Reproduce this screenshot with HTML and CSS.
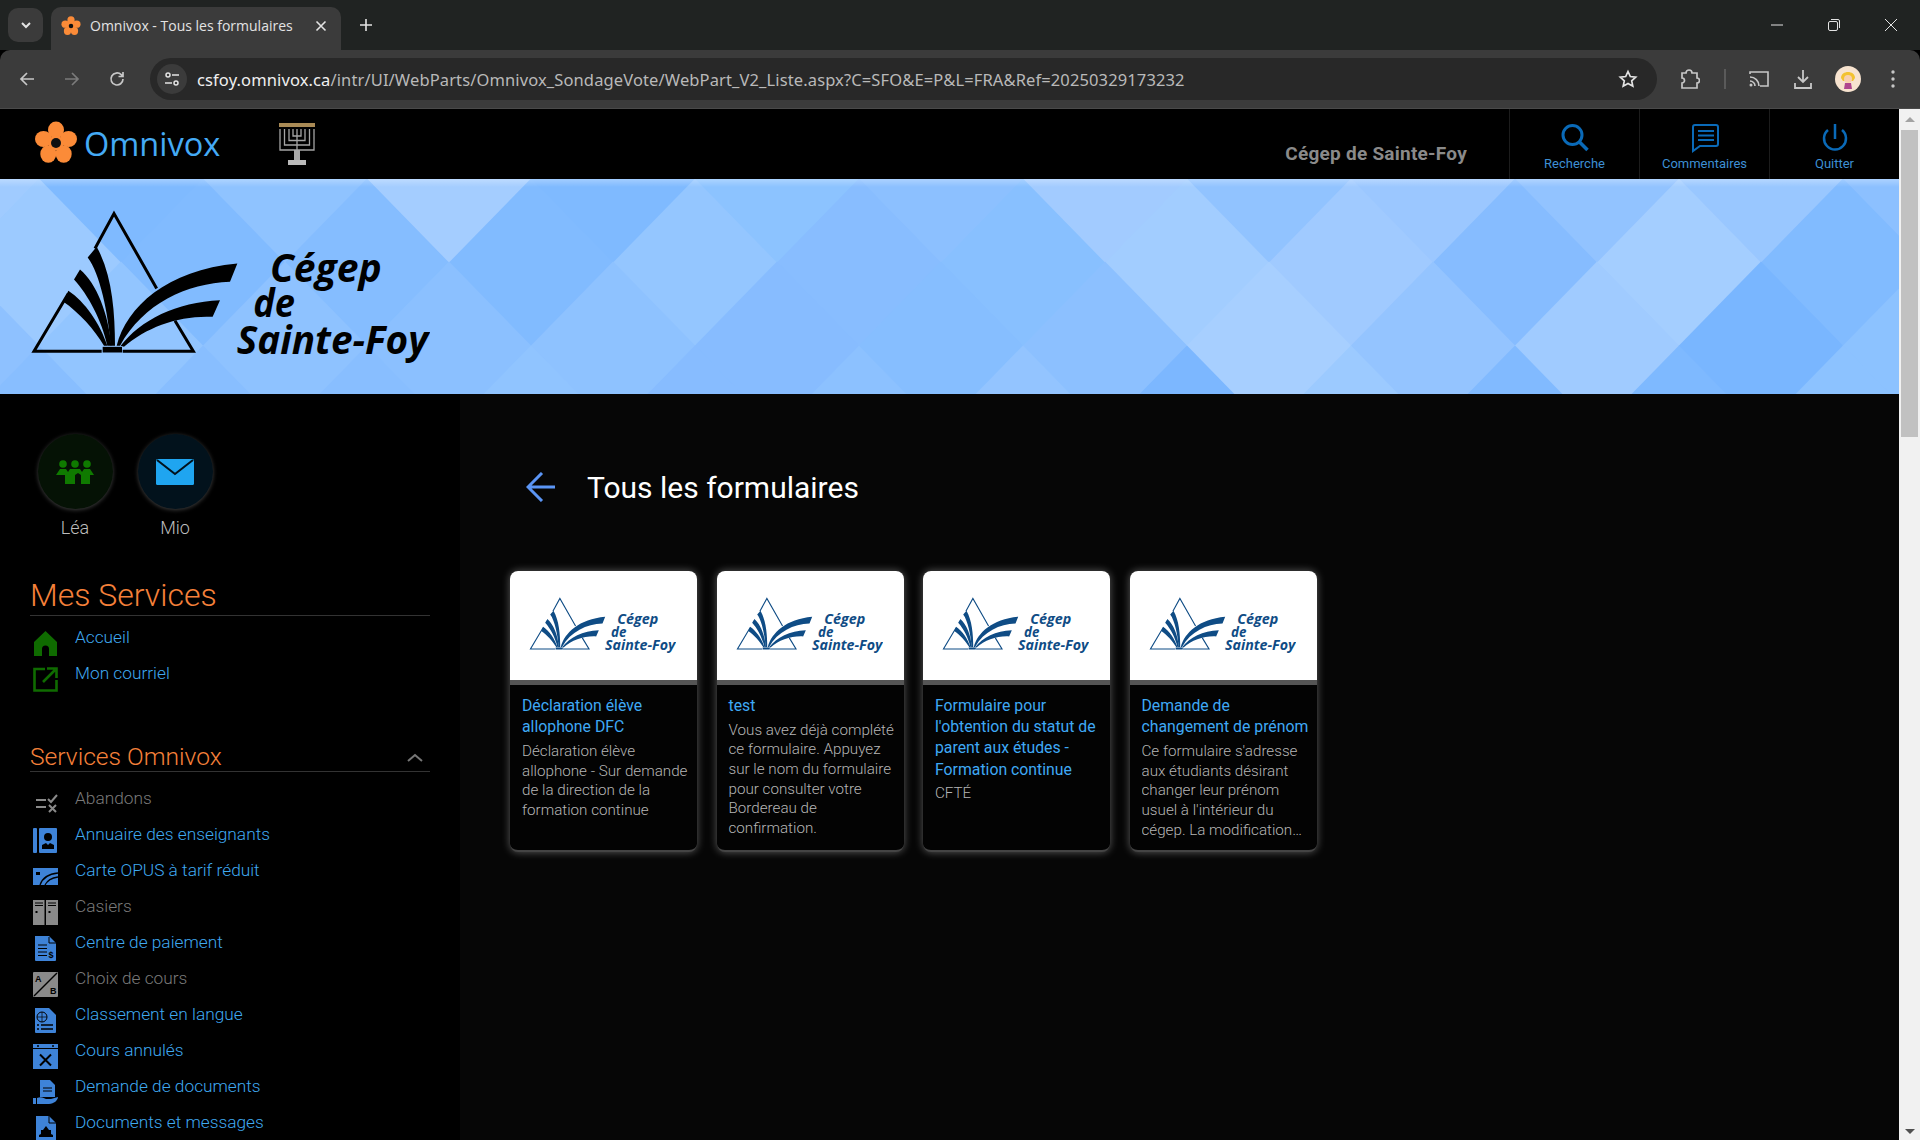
FILE: index.html
```html
<!DOCTYPE html>
<html lang="fr">
  <head>
    <meta charset="UTF-8" />
    <title>Omnivox - Tous les formulaires</title>
    <link rel="stylesheet" href="styles.css">
  </head>
  <body>
    <svg class="defs" width="0" height="0">
      <symbol id="flower" viewBox="-22 -22 44 44">
        <g fill="#fb8b38">
          <ellipse cx="0" cy="-13" rx="8" ry="8.500"/>
          <ellipse cx="12.500" cy="-4" rx="8.500" ry="8"/>
          <ellipse cx="7.700" cy="11" rx="8" ry="8.800"/>
          <ellipse cx="-7.700" cy="11" rx="8" ry="8.800"/>
          <ellipse cx="-12.500" cy="-4" rx="8.500" ry="8"/>
          <circle r="7.500"/>
        </g>
        <circle r="5" fill="#111"/>
      </symbol>
      <g id="cegep-mark">
        <path fill="none" stroke="currentColor" stroke-width="9" d="M285 205L342 100L470 325M525 422L580 513H368M305 513H102L205 340"/>
        <path fill="currentColor" d="M290 200L263 232C300 280 325 400 332 497H345C345 390 335 280 290 200Z"/>
        <path fill="currentColor" d="M240 268L222 298C265 345 305 420 322 497H334C325 400 290 310 240 268Z"/>
        <path fill="currentColor" d="M205 332L190 365C235 395 285 450 312 497H322C300 430 255 365 205 332Z"/>
        <path fill="currentColor" d="M350 497C380 380 500 270 712 250L690 305C560 310 430 370 360 497Z"/>
        <path fill="currentColor" d="M362 497C420 420 530 365 660 360L638 410C540 405 440 440 372 500Z"/>
        <rect x="308" y="500" width="58" height="17" fill="currentColor"/>
      </g>
      <path id="dm" d="M0-84.500L82.500 0 0 84.500-82.500 0z"/>
    </svg>

    <div class="tabstrip">
      <div class="tab-list">
        <svg width="14" height="14" viewBox="0 0 14 14"><path d="M3 5l4 4 4-4" fill="none" stroke="#e3e3e3" stroke-width="2"/></svg>
      </div>
      <div class="tab">
        <svg class="tab-icon" width="20" height="20"><use href="#flower"/></svg>
        <span class="tab-title">Omnivox - Tous les formulaires</span>
        <svg width="12" height="12" viewBox="0 0 12 12"><path d="M1.500 1.500l9 9M10.500 1.500l-9 9" stroke="#e3e3e3" stroke-width="1.600"/></svg>
      </div>
      <svg class="new-tab" width="14" height="14" viewBox="0 0 14 14"><path d="M7 1v12M1 7h12" stroke="#e3e3e3" stroke-width="1.600"/></svg>
      <div class="window-btns">
        <svg width="14" height="14" viewBox="0 0 14 14"><path d="M1 7h12" stroke="#e3e3e3" stroke-width="1"/></svg>
        <svg width="14" height="14" viewBox="0 0 14 14"><rect x="1.500" y="3.500" width="9" height="9" rx="1.500" fill="none" stroke="#e3e3e3"/><path d="M4 1.500h7a1.500 1.500 0 0 1 1.500 1.500v7" fill="none" stroke="#e3e3e3"/></svg>
        <svg width="14" height="14" viewBox="0 0 14 14"><path d="M1 1l12 12M13 1L1 13" stroke="#e3e3e3" stroke-width="1"/></svg>
      </div>
    </div>

    <div class="toolbar">
      <div class="nav-btns">
        <svg width="18" height="18" viewBox="0 0 18 18"><path d="M16 9H3M9 3L3 9l6 6" fill="none" stroke="#c7c7c7" stroke-width="1.700"/></svg>
        <svg width="18" height="18" viewBox="0 0 18 18"><path d="M2 9h13M9 3l6 6-6 6" fill="none" stroke="#7b7b7b" stroke-width="1.700"/></svg>
        <svg width="18" height="18" viewBox="0 0 18 18"><path d="M15 9a6 6 0 1 1-1.800-4.300L15 6.500M15 2v4.500h-4.500" fill="none" stroke="#c7c7c7" stroke-width="1.700"/></svg>
      </div>
      <div class="omnibox">
        <div class="tune">
          <svg width="16" height="16" viewBox="0 0 16 16"><g fill="none" stroke="#e3e3e3" stroke-width="1.500"><circle cx="4" cy="4" r="2"/><path d="M8 4h7M1 12h7"/><circle cx="12" cy="12" r="2"/></g></svg>
        </div>
        <span class="url"><b>csfoy.omnivox.ca</b>/intr/UI/WebParts/Omnivox_SondageVote/WebPart_V2_Liste.aspx?C=SFO&amp;E=P&amp;L=FRA&amp;Ref=20250329173232</span>
        <svg class="star" width="20" height="20" viewBox="0 0 20 20"><path d="M10 2.500l2.300 5 5.400.6-4 3.700 1.100 5.400L10 14.500l-4.800 2.700 1.100-5.400-4-3.700 5.400-.6z" fill="none" stroke="#e3e3e3" stroke-width="1.700"/></svg>
      </div>
      <div class="tool-btns">
        <svg class="tool-ext" width="20" height="22" viewBox="0 0 20 22"><path d="M2 5h4a3 3 0 0 1 6 0h5v5a2.500 2.500 0 0 1 0 5v5H2v-5a2.500 2.500 0 0 0 0-5z" fill="none" stroke="#c7c7c7" stroke-width="1.700"/></svg>
        <span class="tool-sep"></span>
        <svg class="tool-cast" width="22" height="20" viewBox="0 0 22 20"><path d="M2 5V3h18v14h-8M2 8a9 9 0 0 1 9 9M2 12a5 5 0 0 1 5 5" fill="none" stroke="#c7c7c7" stroke-width="1.600"/><circle cx="3" cy="16" r="1.500" fill="#c7c7c7"/></svg>
        <svg class="tool-dl" width="20" height="22" viewBox="0 0 20 22"><path d="M10 2v12M5 9l5 5 5-5M2 15v5h16v-5" fill="none" stroke="#c7c7c7" stroke-width="1.800"/></svg>
        <svg class="tool-avatar" width="26" height="26" viewBox="0 0 26 26"><circle cx="13" cy="13" r="13" fill="#f7e3cf"/><path d="M6 12c0-8 14-8 14 0l-2 3H8z" fill="#f2c230"/><circle cx="13" cy="13" r="4" fill="#f8cfae"/><path d="M9 23l1-6h6l1 6z" fill="#b0458e"/></svg>
        <svg class="tool-dots" width="6" height="20" viewBox="0 0 6 20"><g fill="#c7c7c7"><circle cx="3" cy="3" r="1.700"/><circle cx="3" cy="10" r="1.700"/><circle cx="3" cy="17" r="1.700"/></g></svg>
      </div>
    </div>

    <div class="viewport">
      <div class="page">
        <header class="topbar">
          <div class="brand">
            <svg width="44" height="44"><use href="#flower"/></svg>
            <span class="brand-name">Omnivox</span>
          </div>
          <svg class="menorah" width="38" height="43" viewBox="0 0 38 43">
            <rect x="1" y="0" width="36" height="4" fill="#a98a55"/>
            <path d="M2 6v21h34V6M6.500 6v16h25V6M11 6v11.500h16V6M15 6v7h8V6M19 6v21" fill="none" stroke="#a5a5a5" stroke-width="1.300"/>
            <rect x="16" y="27" width="6" height="10" fill="#aaa"/>
            <rect x="10" y="37" width="18" height="5" fill="#bbb"/>
          </svg>
          <span class="school">Cégep de Sainte-Foy</span>
          <nav class="top-actions">
            <a class="action">
              <svg width="30" height="30" viewBox="0 0 30 30"><circle cx="12.500" cy="12" r="9.500" fill="none" stroke="#0a6ab8" stroke-width="3"/><path d="M19.500 19l8 8" stroke="#0a6ab8" stroke-width="3.500"/></svg>
              <span>Recherche</span>
            </a>
            <a class="action">
              <svg width="30" height="30" viewBox="0 0 30 30"><path d="M5 2h21a2 2 0 0 1 2 2v17a2 2 0 0 1-2 2H10l-7 5V4a2 2 0 0 1 2-2z" fill="none" stroke="#0a6ab8" stroke-width="2"/><path d="M8 8h16M8 12.500h16M8 17h16" stroke="#0a6ab8" stroke-width="2"/></svg>
              <span>Commentaires</span>
            </a>
            <a class="action">
              <svg width="30" height="30" viewBox="0 0 30 30"><path d="M15 1v15" stroke="#0a6ab8" stroke-width="2.500"/><path d="M8 7a11 11 0 1 0 14 0" fill="none" stroke="#0a6ab8" stroke-width="2.500"/></svg>
              <span>Quitter</span>
            </a>
          </nav>
        </header>

        <div class="banner">
          <svg class="banner-bg" viewBox="0 0 1899 215" preserveAspectRatio="none">
            <defs>
              <linearGradient id="top-fade" x1="0" y1="0" x2="0" y2="1">
                <stop offset="0" stop-color="#fff" stop-opacity=".28"/>
                <stop offset="1" stop-color="#fff" stop-opacity="0"/>
              </linearGradient>
            </defs>
            <rect width="1899" height="215" fill="#84bcff"/>
            <g>
              <use href="#dm" x="-43" y="0" fill="#a6ceff"/>
              <use href="#dm" x="121" y="0" fill="#7cb8ff"/>
              <use href="#dm" x="285" y="0" fill="#90c3ff"/>
              <use href="#dm" x="449" y="0" fill="#abd0ff"/>
              <use href="#dm" x="613" y="0" fill="#7cb8ff"/>
              <use href="#dm" x="777" y="0" fill="#8cc4ff"/>
              <use href="#dm" x="941" y="0" fill="#8dc0ff"/>
              <use href="#dm" x="1105" y="0" fill="#a8ceff"/>
              <use href="#dm" x="1269" y="0" fill="#93c3ff"/>
              <use href="#dm" x="1433" y="0" fill="#9fc9ff"/>
              <use href="#dm" x="1597" y="0" fill="#94c3ff"/>
              <use href="#dm" x="1761" y="0" fill="#9dc8ff"/>
              <use href="#dm" x="1925" y="0" fill="#8dc0ff"/>

              <use href="#dm" x="39" y="84" fill="#a0ccff"/>
              <use href="#dm" x="203" y="84" fill="#7fb9ff"/>
              <use href="#dm" x="367" y="84" fill="#84bcff"/>
              <use href="#dm" x="531" y="84" fill="#7fb9ff"/>
              <use href="#dm" x="695" y="84" fill="#96c7ff"/>
              <use href="#dm" x="859" y="84" fill="#87bcff"/>
              <use href="#dm" x="1023" y="84" fill="#88c0ff"/>
              <use href="#dm" x="1187" y="84" fill="#a8d0ff"/>
              <use href="#dm" x="1351" y="84" fill="#a6ccff"/>
              <use href="#dm" x="1515" y="84" fill="#85bbff"/>
              <use href="#dm" x="1679" y="84" fill="#abd1ff"/>
              <use href="#dm" x="1843" y="84" fill="#7fb9ff"/>

              <use href="#dm" x="-43" y="167" fill="#8fc1ff"/>
              <use href="#dm" x="121" y="167" fill="#94c6ff"/>
              <use href="#dm" x="285" y="167" fill="#8fc2ff"/>
              <use href="#dm" x="449" y="167" fill="#8bc0ff"/>
              <use href="#dm" x="613" y="167" fill="#8fc2ff"/>
              <use href="#dm" x="777" y="167" fill="#86bbff"/>
              <use href="#dm" x="941" y="167" fill="#85bdff"/>
              <use href="#dm" x="1105" y="167" fill="#8cc0ff"/>
              <use href="#dm" x="1269" y="167" fill="#aed2ff"/>
              <use href="#dm" x="1433" y="167" fill="#97c5ff"/>
              <use href="#dm" x="1597" y="167" fill="#a5cdff"/>
              <use href="#dm" x="1761" y="167" fill="#75b3ff"/>
              <use href="#dm" x="1925" y="167" fill="#8cc2ff"/>

              <use href="#dm" x="39" y="251" fill="#88bdff"/>
              <use href="#dm" x="203" y="251" fill="#88bdff"/>
              <use href="#dm" x="367" y="251" fill="#88bdff"/>
              <use href="#dm" x="531" y="251" fill="#92c5ff"/>
              <use href="#dm" x="695" y="251" fill="#86bbff"/>
              <use href="#dm" x="859" y="251" fill="#8cc1ff"/>
              <use href="#dm" x="1023" y="251" fill="#95c5ff"/>
              <use href="#dm" x="1187" y="251" fill="#78b5ff"/>
              <use href="#dm" x="1351" y="251" fill="#a0ccff"/>
              <use href="#dm" x="1515" y="251" fill="#7fb8ff"/>
              <use href="#dm" x="1679" y="251" fill="#7bb7ff"/>
              <use href="#dm" x="1843" y="251" fill="#8cc2ff"/>
            </g>
            <rect width="1899" height="215" fill="#8cc1ff" fill-opacity=".2"/>
            <rect width="1899" height="8" fill="url(#top-fade)"/>
          </svg>
          <svg class="banner-logo" width="400" height="157" viewBox="90 90 1200 470">
            <use href="#cegep-mark"/>
            <g class="logo-text">
              <text x="810" y="305" textLength="335" lengthAdjust="spacingAndGlyphs">Cégep</text>
              <text x="760" y="412" textLength="125" lengthAdjust="spacingAndGlyphs">de</text>
              <text x="710" y="522" textLength="575" lengthAdjust="spacingAndGlyphs">Sainte-Foy</text>
            </g>
          </svg>
        </div>

        <div class="content">
          <aside class="sidebar">
            <div class="shortcuts">
              <a class="shortcut">
                <span class="bubble bubble-lea">
                  <svg width="38" height="24" viewBox="0 0 38 24"><g fill="#0f7a00"><circle cx="7" cy="4" r="3.800"/><circle cx="19" cy="4" r="3.800"/><circle cx="31" cy="4" r="3.800"/><path d="M0 15l4-6h6l2 3 2-3h10l2 3 2-3h6l4 6h-4v9h-9v-9l-3-2-3 2v9H9v-9z"/></g></svg>
                </span>
                <span class="shortcut-name">Léa</span>
              </a>
              <a class="shortcut">
                <span class="bubble bubble-mio">
                  <svg width="38" height="26" viewBox="0 0 38 26"><rect width="38" height="26" rx="1.500" fill="#1fa5f0"/><path d="M1 1l18 14L37 1" fill="none" stroke="#02121c" stroke-width="2"/></svg>
                </span>
                <span class="shortcut-name">Mio</span>
              </a>
            </div>

            <h2 class="section-title">Mes Services</h2>
            <ul class="links">
              <li><svg width="25" height="25" viewBox="0 0 25 25"><path d="M12.500 0L24 11v14h-8v-7a3.500 3.500 0 0 0-7 0v7H1V11z" fill="#0f6b00"/></svg><a>Accueil</a></li>
              <li><svg width="25" height="25" viewBox="0 0 25 25"><path d="M12 2H1.500v21.500h22V13M10 15L22 3M14 1.500h9.500V11" fill="none" stroke="#0f6b00" stroke-width="2.600"/></svg><a>Mon courriel</a></li>
            </ul>

            <div class="section-head">
              <h3 class="section-sub">Services Omnivox</h3>
              <svg width="16" height="10" viewBox="0 0 16 10"><path d="M1 8l7-6 7 6" fill="none" stroke="#777" stroke-width="2"/></svg>
            </div>
            <ul class="links">
              <li class="off"><svg width="25" height="25" viewBox="0 0 25 25"><path d="M3 8h10M3 15h10M15 7l3 3 6-7M16 13l7 7M23 13l-7 7" fill="none" stroke="#8a8a8a" stroke-width="2"/></svg><a>Abandons</a></li>
              <li><svg width="25" height="25" viewBox="0 0 25 25"><rect x="0" width="4" height="25" rx="1" fill="#3e83d8"/><rect x="6" width="18" height="25" rx="1" fill="#3e83d8"/><circle cx="15" cy="9" r="4" fill="#000"/><path d="M9 21v-4l4-2 2 2 2-2 4 2v4z" fill="#000"/></svg><a>Annuaire des enseignants</a></li>
              <li><svg width="25" height="25" viewBox="0 0 25 25"><rect y="4" width="25" height="17" fill="#3e83d8"/><path d="M7 21c2-6 8-11 18-12M12 21c2-4 6-7 13-8" fill="none" stroke="#000" stroke-width="1.300"/><rect x="3" y="8" width="4" height="3" fill="#000"/></svg><a>Carte OPUS à tarif réduit</a></li>
              <li class="off"><svg width="25" height="25" viewBox="0 0 25 25"><rect width="11.500" height="25" fill="#8a8a8a"/><rect x="13" width="12" height="25" fill="#8a8a8a"/><path d="M2 3h8M2 5.500h8M15 3h8M15 5.500h8" stroke="#000"/><rect x="2.500" y="11" width="2" height="2" fill="#000"/><rect x="15.500" y="11" width="2" height="2" fill="#000"/></svg><a>Casiers</a></li>
              <li><svg width="25" height="25" viewBox="0 0 25 25"><path d="M2 0h14l7 7v17a1 1 0 0 1-1 1H3a1 1 0 0 1-1-1z" fill="#3e83d8"/><path d="M5 9h9M5 12.500h9M5 16h9M5 19.500h9M16 1v6h7" stroke="#000" fill="none"/><text x="15.500" y="21.500" class="icon-text">$</text></svg><a>Centre de paiement</a></li>
              <li class="off"><svg width="25" height="25" viewBox="0 0 25 25"><rect width="25" height="25" rx="1" fill="#8a8a8a"/><path d="M1 24L24 1" stroke="#000" stroke-width="1.500"/><text x="2" y="10" class="icon-text">A</text><text x="17" y="22" class="icon-text">B</text></svg><a>Choix de cours</a></li>
              <li><svg width="25" height="25" viewBox="0 0 25 25"><path d="M2 0h14l7 7v17a1 1 0 0 1-1 1H3a1 1 0 0 1-1-1z" fill="#3e83d8"/><circle cx="9" cy="9" r="5" fill="none" stroke="#000"/><path d="M4 9h10M9 4v10" stroke="#000" stroke-width=".7"/><path d="M8 17h12M8 21h12" stroke="#000" stroke-width="1.500"/><path d="M4 17h2M4 21h2" stroke="#000" stroke-width="1.500"/></svg><a>Classement en langue</a></li>
              <li><svg width="25" height="25" viewBox="0 0 25 25"><rect width="25" height="25" fill="#3e83d8"/><path d="M0 4.500h25" stroke="#000" stroke-width="1"/><path d="M7 10.500l11 11M18 10.500l-11 11" stroke="#000" stroke-width="2"/><circle cx="5" cy="2" r="1" fill="#000"/><circle cx="20" cy="2" r="1" fill="#000"/></svg><a>Cours annulés</a></li>
              <li><svg width="25" height="25" viewBox="0 0 25 25"><path d="M7 0h10l5 5v12H7z" fill="#3e83d8"/><path d="M10 8h9M10 11h9" stroke="#000"/><path d="M0 18h3v6H0zM4 18c4-2 7 0 9 1h5l7-2c0 3-4 7-9 7H4z" fill="#3e83d8"/></svg><a>Demande de documents</a></li>
              <li><svg width="25" height="25" viewBox="0 0 25 25"><path d="M3 0h13l7 7v18H3z" fill="#3e83d8"/><path d="M16 0v7h7" fill="none" stroke="#000"/><path d="M13 10l3 4h2v4l2 1v2H6v-2l2-1v-4h2z" fill="#000"/></svg><a>Documents et messages</a></li>
            </ul>
          </aside>

          <main class="main">
            <div class="page-title">
              <svg width="30" height="30" viewBox="0 0 30 30"><path d="M29 15H2M16 1L2 15l14 14" fill="none" stroke="#5b95f5" stroke-width="3"/></svg>
              <h1>Tous les formulaires</h1>
            </div>
            <div class="cards">
              <article class="card">
                <div class="card-img">
                  <svg width="147" height="58" viewBox="90 90 1200 470"><use href="#cegep-mark"/><g class="logo-text"><text x="810" y="305" textLength="335" lengthAdjust="spacingAndGlyphs">Cégep</text><text x="760" y="412" textLength="125" lengthAdjust="spacingAndGlyphs">de</text><text x="710" y="522" textLength="575" lengthAdjust="spacingAndGlyphs">Sainte-Foy</text></g></svg>
                </div>
                <div class="card-body">
                  <a class="card-title">Déclaration élève allophone DFC</a>
                  <p class="card-desc">Déclaration élève allophone - Sur demande de la direction de la formation continue</p>
                </div>
              </article>
              <article class="card">
                <div class="card-img">
                  <svg width="147" height="58" viewBox="90 90 1200 470"><use href="#cegep-mark"/><g class="logo-text"><text x="810" y="305" textLength="335" lengthAdjust="spacingAndGlyphs">Cégep</text><text x="760" y="412" textLength="125" lengthAdjust="spacingAndGlyphs">de</text><text x="710" y="522" textLength="575" lengthAdjust="spacingAndGlyphs">Sainte-Foy</text></g></svg>
                </div>
                <div class="card-body">
                  <a class="card-title">test</a>
                  <p class="card-desc">Vous avez déjà complété ce formulaire. Appuyez sur le nom du formulaire pour consulter votre Bordereau de confirmation.</p>
                </div>
              </article>
              <article class="card">
                <div class="card-img">
                  <svg width="147" height="58" viewBox="90 90 1200 470"><use href="#cegep-mark"/><g class="logo-text"><text x="810" y="305" textLength="335" lengthAdjust="spacingAndGlyphs">Cégep</text><text x="760" y="412" textLength="125" lengthAdjust="spacingAndGlyphs">de</text><text x="710" y="522" textLength="575" lengthAdjust="spacingAndGlyphs">Sainte-Foy</text></g></svg>
                </div>
                <div class="card-body">
                  <a class="card-title">Formulaire pour l'obtention du statut de parent aux études - Formation continue</a>
                  <p class="card-desc">CFTÉ</p>
                </div>
              </article>
              <article class="card">
                <div class="card-img">
                  <svg width="147" height="58" viewBox="90 90 1200 470"><use href="#cegep-mark"/><g class="logo-text"><text x="810" y="305" textLength="335" lengthAdjust="spacingAndGlyphs">Cégep</text><text x="760" y="412" textLength="125" lengthAdjust="spacingAndGlyphs">de</text><text x="710" y="522" textLength="575" lengthAdjust="spacingAndGlyphs">Sainte-Foy</text></g></svg>
                </div>
                <div class="card-body">
                  <a class="card-title">Demande de changement de prénom</a>
                  <p class="card-desc card-desc-clamp">Ce formulaire s'adresse aux étudiants désirant changer leur prénom usuel à l'intérieur du cégep. La modification sera appliquée à votre dossier dans Omnivox.</p>
                </div>
              </article>
            </div>
          </main>
        </div>
      </div>

      <div class="scrollbar">
        <span class="arrow-up"></span>
        <span class="thumb"></span>
        <span class="arrow-down"></span>
      </div>
    </div>
  </body>
</html>
```

FILE: styles.css
```css
* {
  box-sizing: border-box;
}

html,
body {
  margin: 0;
  height: 1140px;
  overflow: hidden;
}

body {
  font-family: Roboto, "Liberation Sans", sans-serif;
  background: #000;
  color: #fff;
  display: flex;
  flex-direction: column;
}

a {
  color: inherit;
  text-decoration: none;
}

svg {
  display: block;
  flex: none;
}

.defs {
  position: absolute;
}

.logo-text {
  font-family: "Open Sans", "Liberation Sans", sans-serif;
  font-weight: 700;
  font-style: italic;
  font-size: 118px;
  fill: currentColor;
}

.icon-text {
  font-family: "Liberation Sans", sans-serif;
  font-weight: 700;
  font-size: 9px;
  fill: #000;
}

/* browser chrome */
.tabstrip {
  height: 50px;
  flex: none;
  background: #202322;
  display: flex;
  align-items: flex-end;
}

.tab-list {
  width: 35px;
  height: 34px;
  margin: 0 8px 8px 8px;
  background: #3b3b3b;
  border-radius: 10px;
  display: flex;
  align-items: center;
  justify-content: center;
}

.tab {
  width: 290px;
  height: 43px;
  background: #3b3b3b;
  border-radius: 10px 10px 0 0;
  display: flex;
  align-items: center;
  padding: 0 14px 6px 10px;
}

.tab-icon {
  margin-right: 9px;
}

.tab-title {
  flex: 1;
  font-family: "Open Sans", sans-serif;
  font-size: 14px;
  color: #e3e3e3;
  white-space: nowrap;
}

.new-tab {
  margin: 0 0 18px 18px;
}

.window-btns {
  margin-left: auto;
  display: flex;
  gap: 43px;
  padding: 0 22px 18px 0;
}

.toolbar {
  height: 59px;
  flex: none;
  background: #3b3b3b;
  border-bottom: 1px solid #4a4a4a;
  border-radius: 10px 10px 0 0;
  display: flex;
  align-items: center;
}

.nav-btns {
  display: flex;
  gap: 27px;
  padding-left: 18px;
  width: 150px;
}

.omnibox {
  width: 1507px;
  height: 42px;
  background: #282828;
  border-radius: 21px;
  display: flex;
  align-items: center;
  padding: 0 19px 0 7px;
}

.tune {
  width: 30px;
  height: 30px;
  border-radius: 50%;
  background: #3b3b3b;
  display: flex;
  align-items: center;
  justify-content: center;
  margin-right: 10px;
}

.url {
  flex: 1;
  font-family: "Noto Sans", sans-serif;
  font-size: 16.500px;
  letter-spacing: 0.12px;
  color: #b9b9b9;
  white-space: nowrap;
}

.url b {
  font-weight: 400;
  color: #f0f0f0;
}

.tool-btns {
  display: flex;
  align-items: center;
  flex: 1;
  padding-left: 23px;
}

.tool-sep {
  width: 2px;
  height: 20px;
  background: #5a5a5a;
  margin: 0 22px 0 24px;
}

.tool-dl {
  margin-left: 23px;
}

.tool-avatar {
  margin-left: 22px;
}

.tool-dots {
  margin-left: 29px;
}

/* page */
.viewport {
  flex: 1;
  display: flex;
  min-height: 0;
}

.page {
  width: 1899px;
  flex: none;
  display: flex;
  flex-direction: column;
}

.topbar {
  height: 70px;
  flex: none;
  background: #000;
  display: flex;
  align-items: stretch;
}

.brand {
  display: flex;
  align-items: center;
  gap: 6px;
  padding: 0 0 2px 34px;
  width: 276px;
}

.brand-name {
  font-family: "Open Sans", sans-serif;
  font-size: 32.500px;
  font-weight: 500;
  color: #44aaf5;
}

.menorah {
  align-self: center;
  margin-left: 2px;
}

.school {
  margin-left: auto;
  margin-right: 42px;
  padding-top: 33px;
  font-size: 19px;
  font-weight: 700;
  color: #8a8a8a;
  letter-spacing: 0.25px;
}

.top-actions {
  display: flex;
}

.action {
  width: 130px;
  border-left: 1px solid #1c1c1c;
  display: flex;
  flex-direction: column;
  align-items: center;
  padding-top: 14px;
  font-size: 13px;
  color: #3d8fd4;
  gap: 3px;
}

.banner {
  height: 215px;
  flex: none;
  position: relative;
  background: #84bcff;
  padding: 31px 0 0 30px;
}

.banner-bg {
  position: absolute;
  left: 0;
  top: 0;
  width: 100%;
  height: 100%;
}

.banner-logo {
  position: relative;
  color: #000;
}

.content {
  flex: 1;
  display: flex;
  min-height: 0;
  overflow: hidden;
}

.sidebar {
  width: 460px;
  flex: none;
  background: #000;
  padding: 40px 30px 0 30px;
}

.shortcuts {
  display: flex;
  gap: 24px;
  padding-left: 7px;
  margin-bottom: 39px;
}

.shortcut {
  width: 76px;
  display: flex;
  flex-direction: column;
  align-items: center;
}

.bubble {
  width: 75px;
  height: 75px;
  border-radius: 50%;
  display: flex;
  align-items: center;
  justify-content: center;
  box-shadow: 0 1px 4px rgba(255, 255, 255, 0.25);
}

.bubble-lea {
  background: #051205;
}

.bubble-mio {
  background: #02121c;
}

.shortcut-name {
  margin-top: 9px;
  font-size: 18px;
  font-weight: 300;
  line-height: 20px;
  color: #bdbdbd;
}

.section-title {
  margin: 0 0 11px 0;
  height: 39px;
  line-height: 36px;
  font-size: 32px;
  font-weight: 300;
  color: #f5803a;
  border-bottom: 1px solid #333;
}

.section-head {
  margin-top: 34px;
  height: 39px;
  display: flex;
  align-items: flex-end;
  justify-content: space-between;
  padding: 0 7px 0 0;
  border-bottom: 1px solid #333;
  margin-bottom: 16px;
}

.section-head svg {
  margin-bottom: 8px;
}

.section-sub {
  margin: 0 0 -1px 0;
  font-size: 24.600px;
  font-weight: 300;
  line-height: 30px;
  color: #f5803a;
}

.links {
  list-style: none;
  margin: 0;
  padding: 0;
}

.links li {
  height: 36px;
  display: flex;
  align-items: flex-start;
  font-size: 17.300px;
  font-weight: 300;
  line-height: 20px;
  color: #3fa9f0;
}

.links li svg {
  margin: 4px 17px 0 3px;
}

.links .off {
  color: #7a7a7a;
}

.main {
  flex: 1;
  background: #060606;
  padding: 0 0 0 50px;
}

.page-title {
  display: flex;
  align-items: center;
  height: 186px;
  padding-left: 16px;
}

.page-title svg {
  margin-right: 31px;
}

.page-title h1 {
  margin: 0;
  font-size: 30px;
  font-weight: 400;
  color: #fff;
}

.cards {
  display: flex;
  gap: 19.500px;
  margin-top: -9px;
}

.card {
  width: 187px;
  height: 281px;
  background: #030303;
  border-radius: 8px;
  overflow: hidden;
  box-shadow: 0 0 8px rgba(255, 255, 255, 0.35);
  border-bottom: 2px solid #444;
}

.card-img {
  height: 114px;
  background: #fff;
  border-bottom: 5px solid #555;
  display: flex;
  align-items: center;
  justify-content: center;
  padding-right: 2px;
  color: #0f4c85;
}

.card-body {
  padding: 10px 7px 0 12px;
}

.card-title {
  display: block;
  font-size: 15.800px;
  font-weight: 400;
  line-height: 21.200px;
  color: #3fa9f5;
}

.card-desc {
  margin: 4.400px 0 0 0;
  font-size: 15.200px;
  font-weight: 300;
  line-height: 19.700px;
  color: #b5b5b5;
}

.card-desc-clamp {
  display: -webkit-box;
  -webkit-box-orient: vertical;
  -webkit-line-clamp: 5;
  overflow: hidden;
}

.scrollbar {
  width: 21px;
  flex: none;
  background: #f1f1f1;
  display: flex;
  flex-direction: column;
  align-items: center;
  padding-top: 8px;
}

.arrow-up {
  width: 0;
  height: 0;
  border: 5px solid transparent;
  border-top: 0;
  border-bottom: 5px solid #a3a3a3;
}

.thumb {
  width: 17px;
  height: 307px;
  margin-top: 8px;
  background: #c1c1c1;
}

.arrow-down {
  margin-top: auto;
  margin-bottom: 6px;
  width: 0;
  height: 0;
  border: 5px solid transparent;
  border-bottom: 0;
  border-top: 5px solid #505050;
}
```
